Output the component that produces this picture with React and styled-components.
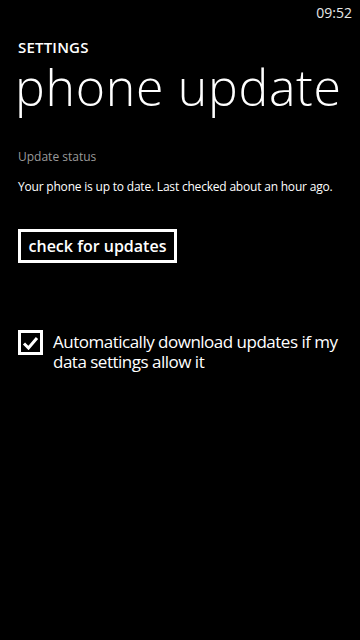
import React from "react";
import styled, { createGlobalStyle } from "styled-components";

const Global = createGlobalStyle`
	html, body {
		margin: 0;
		padding: 0;
		background: #000;
	}
	* {
		box-sizing: border-box;
	}
`;

const Screen = styled.div`
	width: 360px;
	height: 640px;
	background: #000;
	color: #fff;
	font-family: "Open Sans", "DejaVu Sans", sans-serif;
	display: flex;
	flex-direction: column;
	overflow: hidden;
`;

const StatusBar = styled.div`
	height: 24px;
	display: flex;
	justify-content: flex-end;
	align-items: center;
	padding: 0 8px 0 0;
	font-size: 14px;
	color: #e8e8e8;
`;

const Header = styled.div`
	padding: 14px 0 0 18px;
	display: flex;
	flex-direction: column;
`;

const AppName = styled.div`
	font-size: 15px;
	font-weight: 600;
	line-height: 18px;
	letter-spacing: 0.2px;
`;

const PageTitle = styled.h1`
	margin: 2px 0 0 -3px;
	font-size: 50px;
	font-weight: 300;
	line-height: 58px;
	letter-spacing: 0.7px;
`;

const Content = styled.div`
	padding: 33px 18px 0 18px;
	display: flex;
	flex-direction: column;
`;

const Label = styled.div`
	font-size: 12px;
	color: #9a9a9a;
	line-height: 16px;
`;

const Status = styled.p`
	margin: 14px 0 0;
	font-size: 12px;
	line-height: 16px;
	letter-spacing: -0.2px;
`;

const Button = styled.button`
	align-self: flex-start;
	margin-top: 34px;
	width: 159px;
	height: 34px;
	padding: 0;
	background: transparent;
	border: 3px solid #fff;
	color: #fff;
	font-family: inherit;
	font-size: 16px;
	font-weight: 600;
	line-height: 1;
`;

const CheckRow = styled.label`
	display: flex;
	align-items: flex-start;
	gap: 10px;
	margin-top: 67px;
`;

const Box = styled.span`
	flex: none;
	width: 25px;
	height: 25px;
	border: 3px solid #fff;
	display: flex;
	align-items: center;
	justify-content: center;
`;

const CheckText = styled.span`
	font-size: 17px;
	line-height: 20px;
	letter-spacing: -0.5px;
	padding-top: 2px;
`;

const App = () => {
	return (
		<Screen>
			<Global />
			<StatusBar>09:52</StatusBar>
			<Header>
				<AppName>SETTINGS</AppName>
				<PageTitle>phone update</PageTitle>
			</Header>
			<Content>
				<Label>Update status</Label>
				<Status>Your phone is up to date. Last checked about an hour ago.</Status>
				<Button>check for updates</Button>
				<CheckRow>
					<Box>
						<svg width="17" height="14" viewBox="0 0 17 14">
							<path d="M2 7.5 L6.5 12 L15 2" fill="none" stroke="#fff" strokeWidth="3" />
						</svg>
					</Box>
					<CheckText>Automatically download updates if my data settings allow it</CheckText>
				</CheckRow>
			</Content>
		</Screen>
	);
};

export default App;
